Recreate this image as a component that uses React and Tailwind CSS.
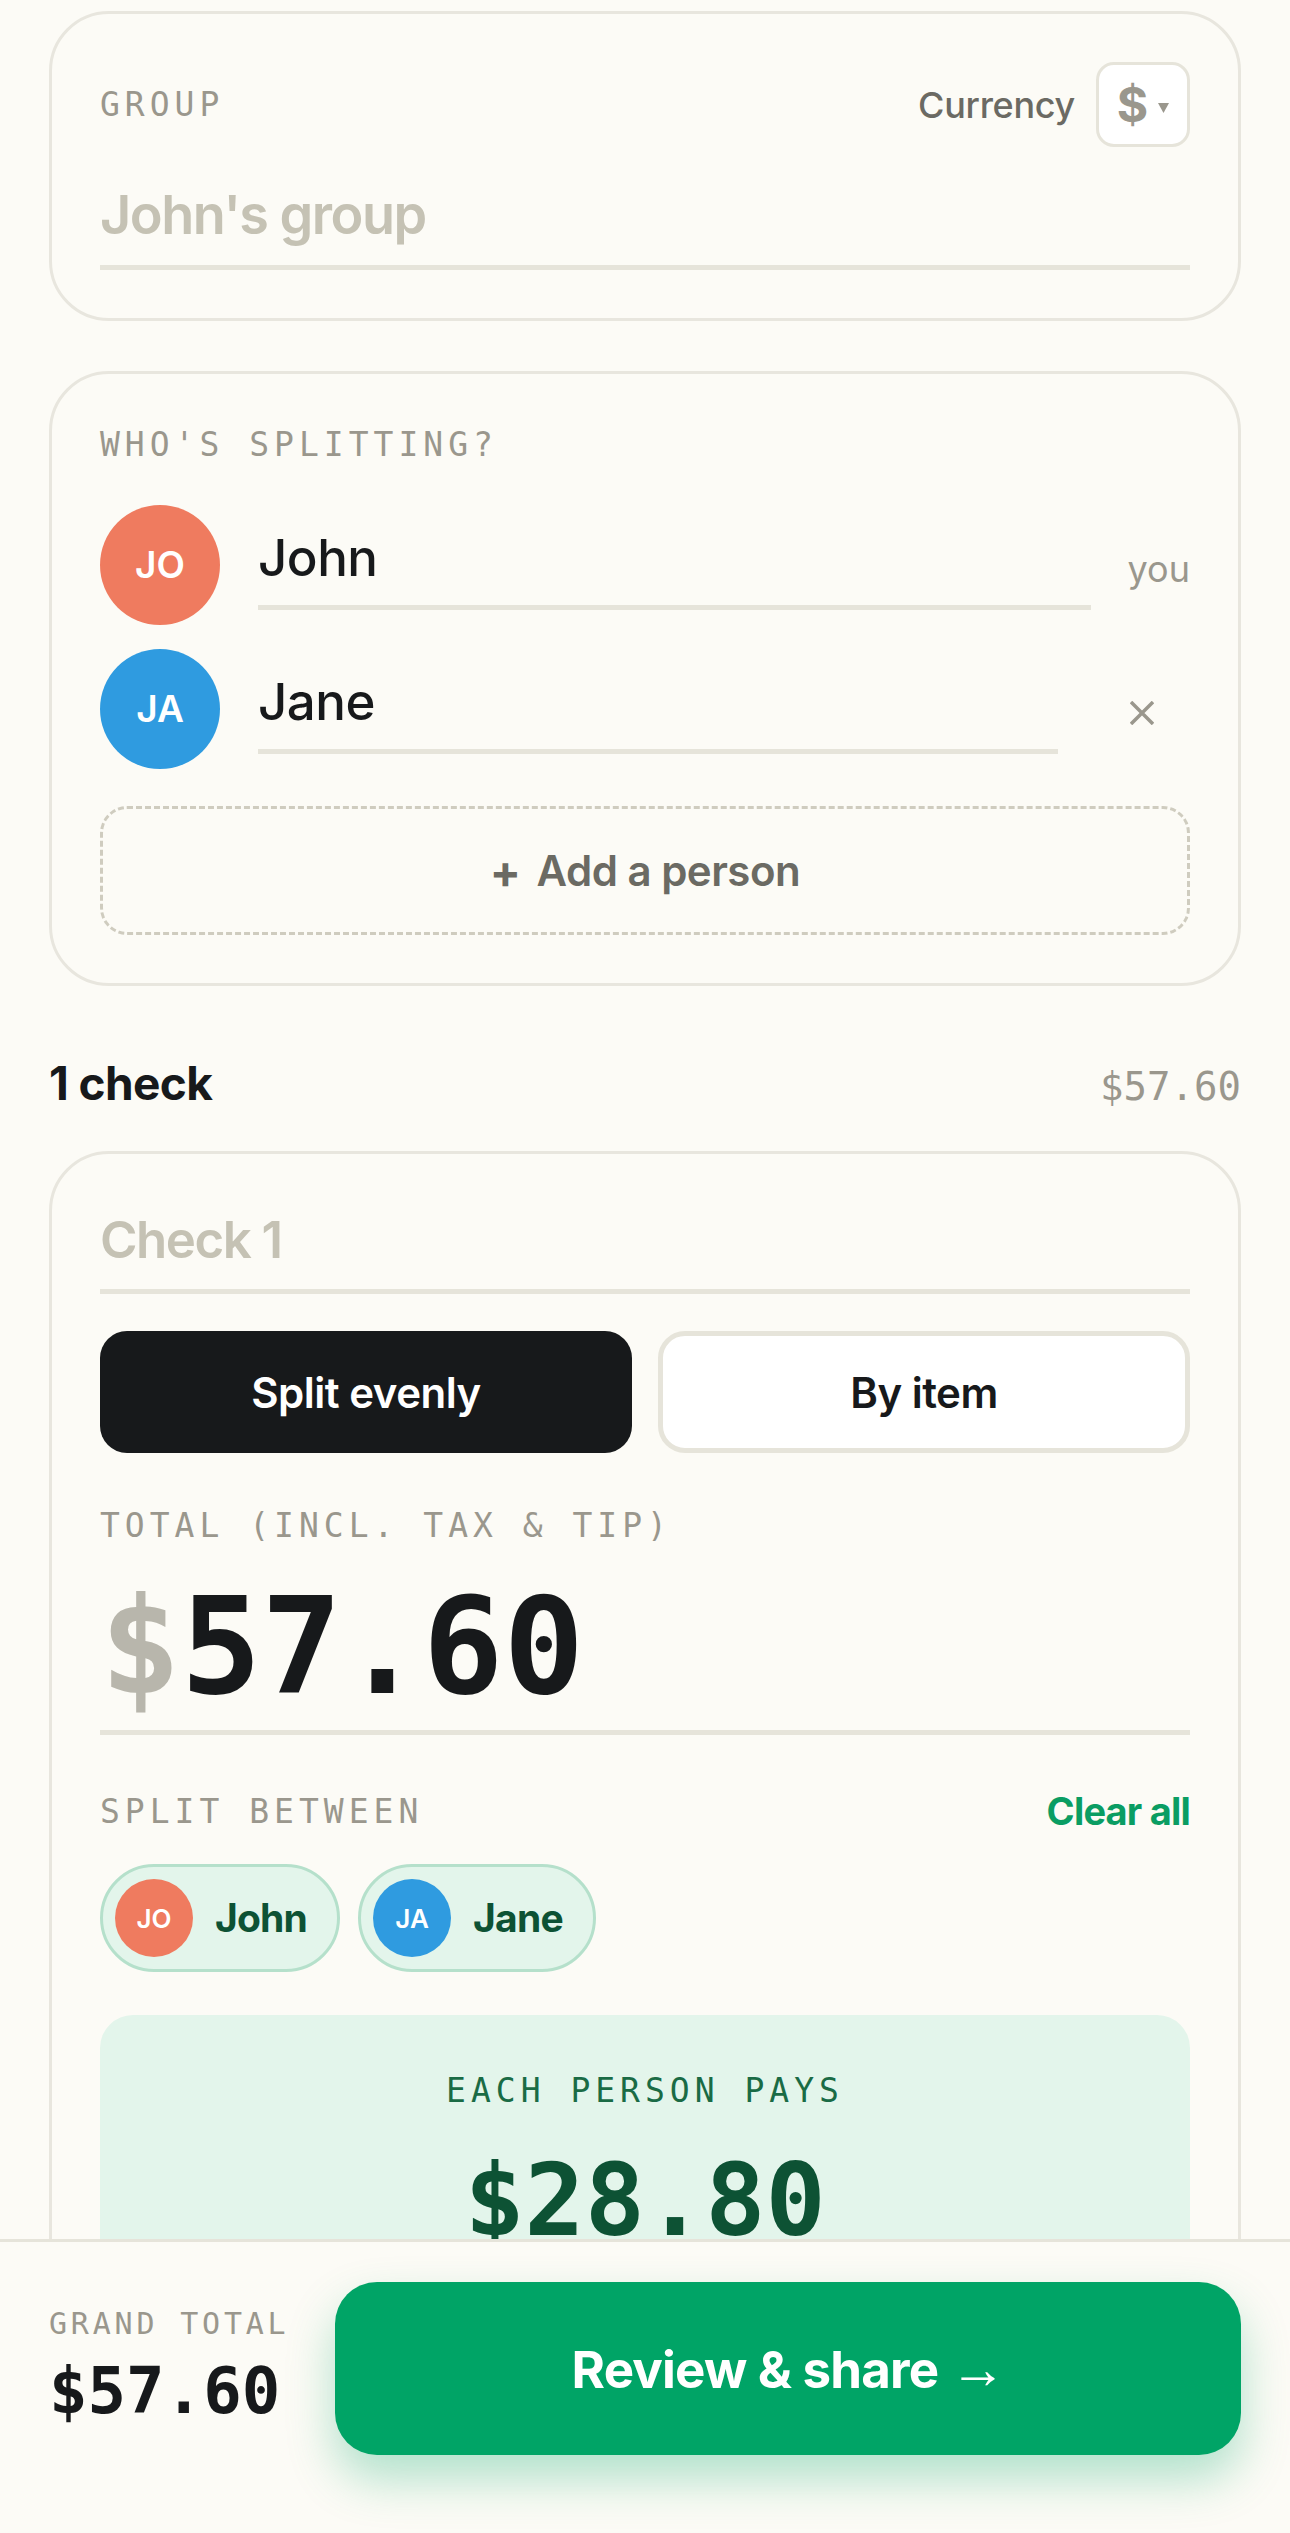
const sans = "font-['Inter','Noto_Sans',sans-serif]";
const mono = "font-['DejaVu_Sans_Mono','Liberation_Mono',monospace]";

function Label({ children, className = '' }) {
  return (
    <div className={`${mono} text-[33px] leading-[46px] tracking-[5px] text-[#9a978d] ${className}`}>
      {children}
    </div>
  );
}

function Avatar({ initials, color, size = 'lg' }) {
  const big = size === 'lg';
  return (
    <div
      className={`${color} ${big ? 'w-[120px] h-[120px] text-[37px]' : 'w-[78px] h-[78px] text-[26px]'} shrink-0 rounded-full flex items-center justify-center text-white font-semibold`}
    >
      {initials}
    </div>
  );
}

function PersonRow({ initials, color, name, trailing, className = '' }) {
  return (
    <div className={`flex items-center h-[120px] ${className}`}>
      <Avatar initials={initials} color={color} />
      <div className="flex-1 ml-[38px] mt-[6px] border-b-[5px] border-[#e6e4da] pb-[16px]">
        <div className="text-[51px] leading-[62px] font-medium text-[#17191b] tracking-[-0.5px]">{name}</div>
      </div>
      {trailing}
    </div>
  );
}

function Chip({ initials, color, name }) {
  return (
    <div className="flex items-center h-[108px] rounded-full border-[3px] border-[#b5e0cb] bg-[#e3f5eb] pl-[12px] pr-[30px] gap-[22px]">
      <Avatar initials={initials} color={color} size="sm" />
      <span className="text-[39px] font-bold text-[#0d5234] tracking-[-0.8px]">{name}</span>
    </div>
  );
}

export default function App() {
  return (
    <div className={`${sans} relative h-[2533px] overflow-hidden bg-[#fcfbf6] text-[#17191b]`}>
      <div className="px-[49px] pt-[11px]">
        {/* group */}
        <section className="rounded-[60px] border-[3px] border-[#e8e6de] p-[48px]">
          <div className="flex items-center justify-between h-[85px]">
            <Label>GROUP</Label>
            <div className="flex items-center gap-[21px]">
              <span className="text-[36px] font-medium text-[#6b6a63] tracking-[-0.3px]">Currency</span>
              <div className="w-[94px] h-[85px] rounded-[18px] border-[3px] border-[#e6e4da] bg-white flex items-center justify-center gap-[10px]">
                <span className="text-[48px] font-bold text-[#9a978d] leading-none">$</span>
                <svg width="11" height="11" viewBox="0 0 11 11" className="mt-[6px]">
                  <polygon points="0,1 11,1 5.5,11" fill="#9a978d" />
                </svg>
              </div>
            </div>
          </div>
          <div className="mt-[35px] border-b-[5px] border-[#e6e4da] pb-[18px]">
            <div className="text-[54px] leading-[65px] font-semibold text-[#c5c2b4] tracking-[-1.5px]">John's group</div>
          </div>
        </section>

        {/* people */}
        <section className="mt-[50px] rounded-[60px] border-[3px] border-[#e8e6de] p-[48px]">
          <Label>WHO'S SPLITTING?</Label>
          <PersonRow
            className="mt-[37px]"
            initials="JO"
            color="bg-[#ef7b5f]"
            name="John"
            trailing={<span className="ml-[37px] mt-[8px] text-[36px] text-[#9a978d]">you</span>}
          />
          <PersonRow
            className="mt-[24px]"
            initials="JA"
            color="bg-[#2f9be0]"
            name="Jane"
            trailing={
              <button className="ml-[36px] mt-[8px] w-[96px] h-[96px] flex items-center justify-center">
                <svg width="24" height="24" viewBox="0 0 24 24">
                  <path d="M1 1L23 23M23 1L1 23" stroke="#9a978d" strokeWidth="3.5" />
                </svg>
              </button>
            }
          />
          <button className="mt-[37px] w-full h-[129px] rounded-[27px] border-[3px] border-dashed border-[#cfccbf] flex items-center justify-center text-[42px] font-semibold text-[#6b6a63] tracking-[-0.5px]">
            <span className="mr-[16px] font-bold text-[46px] leading-none">+</span>
            Add a person
          </button>
        </section>

        {/* checks header */}
        <div className="mt-[70px] flex items-baseline justify-between h-[54px]">
          <span className="text-[46px] leading-[54px] font-bold tracking-[-0.6px]">1 check</span>
          <span className={`${mono} text-[39px] text-[#9a978d]`}>$57.60</span>
        </div>

        {/* check card */}
        <section className="mt-[41px] rounded-[60px] border-[3px] border-[#e8e6de] p-[48px]">
          <div className="mt-[7px] border-b-[5px] border-[#e6e4da] pb-[18px]">
            <div className="text-[51px] leading-[62px] font-semibold text-[#c5c2b4] tracking-[-1.5px]">Check 1</div>
          </div>

          <div className="mt-[37px] grid grid-cols-2 gap-[26px]">
            <button className="h-[122px] rounded-[27px] bg-[#17191b] text-white text-[42px] font-semibold tracking-[-0.5px]">
              Split evenly
            </button>
            <button className="h-[122px] rounded-[27px] bg-white border-[5px] border-[#e6e4da] text-[#17191b] text-[42px] font-semibold tracking-[-0.5px]">
              By item
            </button>
          </div>

          <Label className="mt-[50px]">TOTAL (INCL. TAX &amp; TIP)</Label>
          <div className="mt-[31px] border-b-[5px] border-[#e6e4da] pb-[16px]">
            <div className={`${mono} text-[134px] leading-[134px] font-bold text-[#17191b]`}>
              <span className="text-[#b8b6ac]">$</span>57.60
            </div>
          </div>

          <div className="mt-[48px] flex items-center justify-between">
            <Label>SPLIT BETWEEN</Label>
            <span className="text-[38px] font-bold text-[#0a9d63] tracking-[-0.8px]">Clear all</span>
          </div>
          <div className="mt-[24px] flex gap-[18px]">
            <Chip initials="JO" color="bg-[#ef7b5f]" name="John" />
            <Chip initials="JA" color="bg-[#2f9be0]" name="Jane" />
          </div>

          <div className="mt-[43px] rounded-[33px] bg-[#e3f5eb] pt-[53px] pb-[80px] flex flex-col items-center">
            <div className={`${mono} text-[33px] leading-[46px] tracking-[5px] text-[#1a6b45]`}>EACH PERSON PAYS</div>
            <div className={`${mono} mt-[37px] text-[100px] leading-[100px] font-bold text-[#0d5234]`}>$28.80</div>
          </div>
        </section>
      </div>

      {/* bottom bar */}
      <div className="absolute left-0 right-0 bottom-0 h-[294px] border-t-[3px] border-[#e6e4da] bg-[#fcfbf6] px-[49px] pt-[40px]">
        <div className="flex items-center gap-[46px]">
          <div className="mt-[-8px]">
            <div className={`${mono} text-[30px] leading-[36px] tracking-[3.8px] text-[#9a978d]`}>GRAND TOTAL</div>
            <div className={`${mono} mt-[17px] text-[64px] leading-[64px] font-bold text-[#17191b]`}>$57.60</div>
          </div>
          <button className="flex-1 h-[173px] rounded-[42px] bg-[#00a466] text-white text-[51px] font-bold tracking-[-0.8px] shadow-[0_24px_48px_rgba(0,164,102,0.3)]">
            Review &amp; share{' '}
            <span className="font-['Liberation_Sans',sans-serif] font-normal text-[56px]">→</span>
          </button>
        </div>
      </div>
    </div>
  );
}
